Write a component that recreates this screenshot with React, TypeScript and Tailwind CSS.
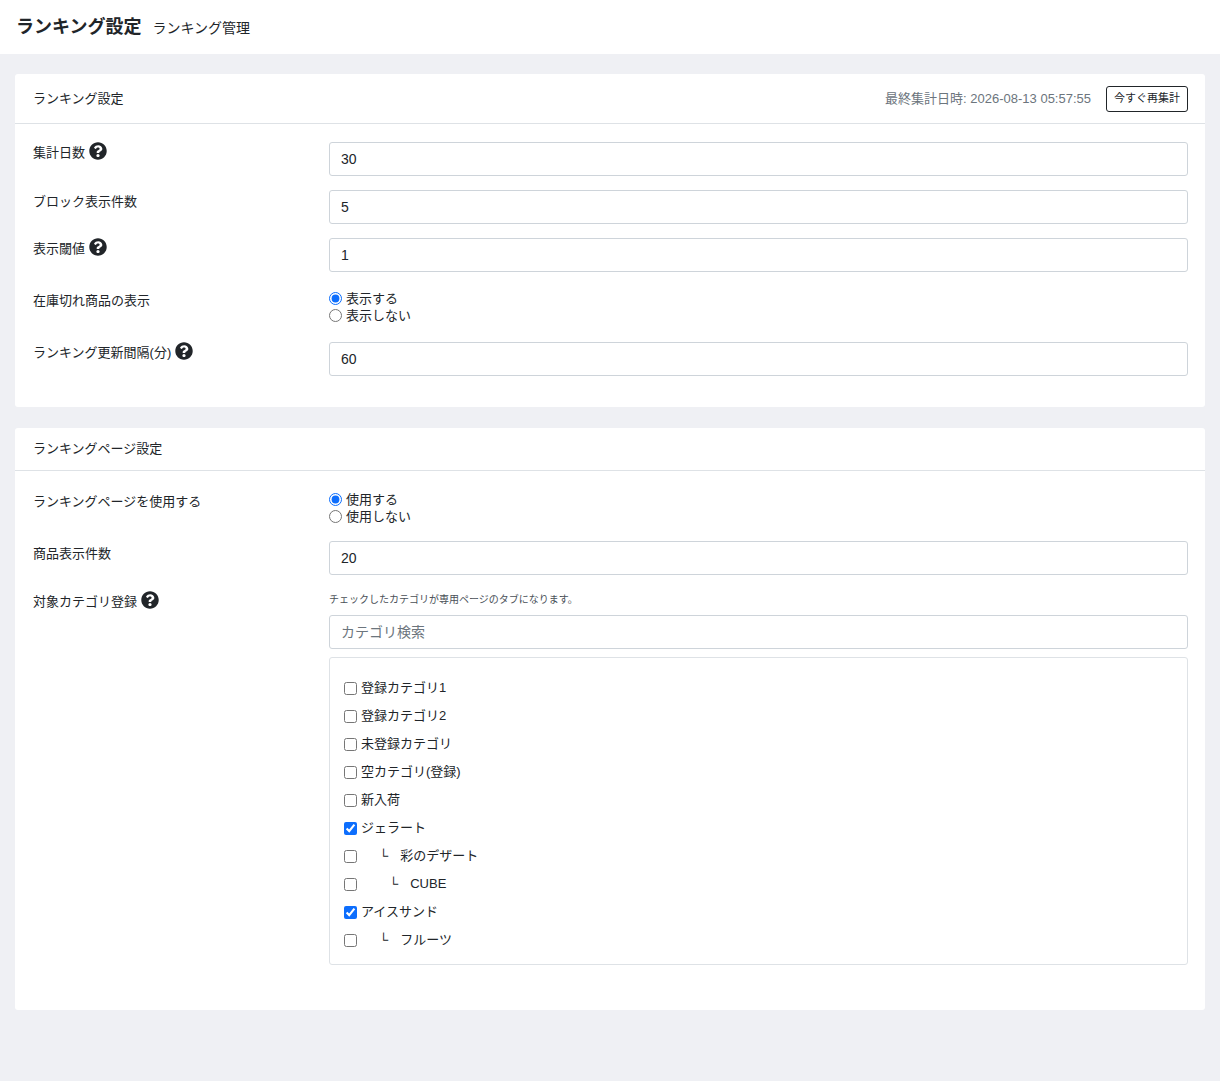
import { FaQuestionCircle } from "react-icons/fa";

const font = { fontFamily: '"Liberation Sans", "Noto Sans CJK JP", sans-serif' };

function Help() {
  return <FaQuestionCircle className="inline-block ml-1 text-[18px] text-[#212529] align-[-3px]" />;
}

function Row({ label, help, children, top = "pt-[6px]" }: { label: string; help?: boolean; children: React.ReactNode; top?: string }) {
  return (
    <div className="flex">
      <div className={`w-[296px] shrink-0 text-[13px] text-[#212529] ${top}`}>
        {label}
        {help && <Help />}
      </div>
      <div className="flex-1">{children}</div>
    </div>
  );
}

function Input({ value, placeholder }: { value?: string; placeholder?: string }) {
  return (
    <input
      defaultValue={value}
      placeholder={placeholder}
      className="w-full h-[34px] border border-[#ced4da] rounded-[3px] px-[11px] text-[14px] text-[#212529] placeholder-[#6c757d] bg-white"
    />
  );
}

function Radio({ name, labels }: { name: string; labels: string[] }) {
  return (
    <div className="flex flex-col text-[13px] text-[#212529] leading-[17px]">
      {labels.map((l, i) => (
        <label key={l} className="flex items-center gap-[4px]">
          <input type="radio" name={name} defaultChecked={i === 0} className="w-[13px] h-[13px] m-0 accent-[#0d6efd]" />
          {l}
        </label>
      ))}
    </div>
  );
}

const cats: [string, boolean, string][] = [
  ["登録カテゴリ1", false, ""],
  ["登録カテゴリ2", false, ""],
  ["未登録カテゴリ", false, ""],
  ["空カテゴリ(登録)", false, ""],
  ["新入荷", false, ""],
  ["ジェラート", true, ""],
  ["彩のデザート", false, "pl-[14px]"],
  ["CUBE", false, "pl-[24px]"],
  ["アイスサンド", true, ""],
  ["フルーツ", false, "pl-[14px]"],
];

export default function App() {
  return (
    <div style={font} className="min-h-[1081px] bg-[#eff0f4] text-[#212529]">
      <div className="h-[54px] bg-white flex items-center px-[16px] gap-[11px]">
        <span className="text-[18px] font-bold">ランキング設定</span>
        <span className="text-[14px] pt-[2px]">ランキング管理</span>
      </div>
      <div className="p-[15px] pt-[20px] flex flex-col gap-[21px]">
        <div className="bg-white rounded-[3px]">
          <div className="h-[50px] border-b border-[#dee2e6] flex items-center justify-between px-[18px] pr-[17px]">
            <span className="text-[13px]">ランキング設定</span>
            <div className="flex items-center gap-[15px]">
              <span className="text-[13px] text-[#6c757d]">最終集計日時: 2026-08-13 05:57:55</span>
              <button className="border border-[#212529] rounded-[3px] px-[7px] h-[26px] text-[11px] bg-white">今すぐ再集計</button>
            </div>
          </div>
          <div className="px-[18px] pr-[17px] pt-[18px] pb-[31px] flex flex-col gap-[14px]">
            <Row label="集計日数" help top="pt-[0px]"><Input value="30" /></Row>
            <Row label="ブロック表示件数" top="pt-[2px]"><Input value="5" /></Row>
            <Row label="表示閾値" help top="pt-[0px]"><Input value="1" /></Row>
            <Row label="在庫切れ商品の表示" top="pt-[5px]">
              <div className="pt-[4px] pb-[4px]"><Radio name="stock" labels={["表示する", "表示しない"]} /></div>
            </Row>
            <Row label="ランキング更新間隔(分)" help top="pt-[0px]"><Input value="60" /></Row>
          </div>
        </div>

        <div className="bg-white rounded-[3px]">
          <div className="h-[43px] border-b border-[#dee2e6] flex items-center px-[18px]">
            <span className="text-[13px]">ランキングページ設定</span>
          </div>
          <div className="px-[18px] pr-[17px] pt-[20px] pb-[45px] flex flex-col gap-[16px]">
            <Row label="ランキングページを使用する" top="pt-[1px]">
              <Radio name="page" labels={["使用する", "使用しない"]} />
            </Row>
            <Row label="商品表示件数" top="pt-[3px]"><Input value="20" /></Row>
            <Row label="対象カテゴリ登録" help top="pt-[0px]">
              <div className="text-[10px] text-[#495057] pt-[1px] mb-[8px]">チェックしたカテゴリが専用ページのタブになります。</div>
              <Input placeholder="カテゴリ検索" />
              <div className="mt-[8px] border border-[#dee2e6] rounded-[3px] pt-[16px] pb-[10px] px-[14px] flex flex-col">
                {cats.map(([n, c, pad]) => (
                  <label key={n} className="h-[28px] flex items-center gap-[4px] text-[13px]">
                    <input type="checkbox" defaultChecked={c} className="w-[13px] h-[13px] m-0 accent-[#0d6efd]" />
                    {pad ? (
                      <span className={`${pad} flex gap-[12px]`}><span className="pl-[4px]">└</span>{n}</span>
                    ) : (
                      n
                    )}
                  </label>
                ))}
              </div>
            </Row>
          </div>
        </div>
      </div>
    </div>
  );
}
